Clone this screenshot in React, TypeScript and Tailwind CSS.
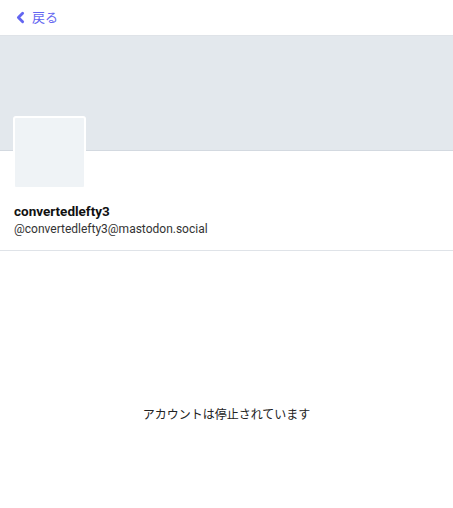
import { ChevronLeft } from "lucide-react";

export default function App() {
  return (
    <div className="min-h-[508px] bg-white text-[#111] font-['Roboto','Noto_Sans_CJK_JP',sans-serif]">
      <div className="h-[36px] flex items-center px-3 border-b border-[#dfe3e8]">
        <button className="flex items-center gap-[3px] text-[#6366f1] text-[13px]">
          <ChevronLeft className="w-[17px] h-[17px]" strokeWidth={4} />
          <span>戻る</span>
        </button>
      </div>
      <div className="h-[115px] bg-[#e3e8ed] border-b border-[#d3d9e0]"></div>
      <div className="px-[14px] border-b border-[#dfe3e8] pb-[12px]">
        <div className="w-[73px] h-[73px] -mt-[35px] -ml-px bg-[#eff3f6] border-2 border-white rounded-[3px]"></div>
        <div className="mt-[13px] font-bold text-[13.5px] leading-[18px]">convertedlefty3</div>
        <div className="text-[12px] leading-[18px] text-[#333]">@convertedlefty3@mastodon.social</div>
      </div>
      <div className="pt-[155px] text-center text-[12px] text-[#222]">アカウントは停止されています</div>
    </div>
  );
}
